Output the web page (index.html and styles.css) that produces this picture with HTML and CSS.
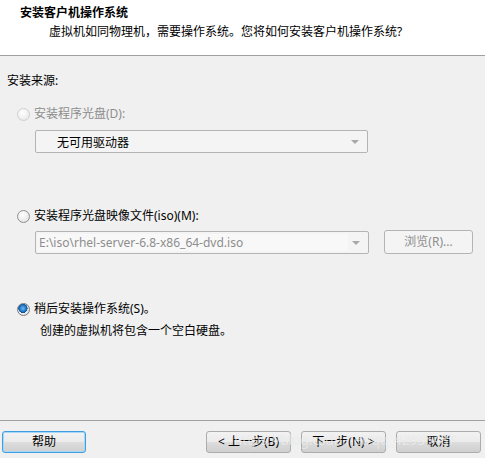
FILE: index.html
```html
<!DOCTYPE html>
<html lang="zh-CN">
<head>
<meta charset="utf-8">
<title>新建虚拟机向导</title>
<link rel="stylesheet" href="styles.css">
</head>
<body>
<div class="dialog">
  <div class="header">
    <div class="title">安装客户机操作系统</div>
    <div class="subtitle">虚拟机如同物理机，需要操作系统。您将如何安装客户机操作系统?</div>
  </div>
  <div class="main">
    <div class="section-label">安装来源:</div>

    <div class="option opt-disc">
      <span class="radio disabled"></span>
      <span class="label disabled-text">安装程序光盘(D):</span>
    </div>
    <div class="combo disabled-combo">
      <span class="combo-text">无可用驱动器</span>
      <span class="arrow"></span>
    </div>

    <div class="option opt-iso">
      <span class="radio"></span>
      <span class="label">安装程序光盘映像文件(iso)(M):</span>
    </div>
    <div class="iso-row">
      <div class="combo iso-combo">
        <span class="iso-field">E:\iso\rhel-server-6.8-x86_64-dvd.iso</span>
        <span class="arrow"></span>
      </div>
      <div class="btn browse">浏览(R)...</div>
    </div>

    <div class="option opt-later">
      <span class="radio checked"></span>
      <span class="label">稍后安装操作系统(S)。</span>
    </div>
    <div class="note">创建的虚拟机将包含一个空白硬盘。</div>
  </div>
  <div class="footer">
    <div class="btn help">帮助</div>
    <div class="nav">
      <div class="btn">&lt; 上一步(B)</div>
      <div class="btn">下一步(N) &gt;</div>
      <div class="btn">取消</div>
    </div>
    <div class="watermark">https://blog.csdn.net/qq_42935487</div>
  </div>
</div>
</body>
</html>
```
FILE: styles.css
```css
html, body {
  margin: 0;
  padding: 0;
}
body {
  width: 485px;
  height: 458px;
  background: #f0f0f0;
  font-family: "Noto Sans", "Noto Sans CJK SC", sans-serif;
  font-size: 12px;
  color: #000;
  overflow: hidden;
}
.dialog {
  display: flex;
  flex-direction: column;
  height: 458px;
}
.header {
  background: #fff;
  border-bottom: 1px solid #a0a0a0;
  box-sizing: border-box;
  height: 56px;
  padding-top: 4px;
}
.title {
  font-weight: bold;
  padding-left: 20px;
  line-height: 17px;
}
.subtitle {
  padding-left: 49px;
  line-height: 17px;
  margin-top: 2px;
}
.main {
  flex: 1;
  padding: 0 0 0 7px;
  display: flex;
  flex-direction: column;
}
.section-label {
  margin-top: 17px;
  line-height: 16px;
}
.option {
  display: flex;
  align-items: center;
  gap: 4px;
  margin-left: 10px;
  height: 16px;
}
.opt-disc { margin-top: 17px; }
.opt-iso { margin-top: 55px; }
.opt-later { margin-top: 47px; }
.radio {
  width: 11px;
  height: 11px;
  border-radius: 50%;
  border: 1px solid #8f8f8f;
  background: radial-gradient(circle at 40% 35%, #ffffff 0%, #ececec 55%, #d6d6d6 100%);
  box-sizing: content-box;
  flex: none;
}
.radio.disabled {
  border-color: #cfcfcf;
  background: radial-gradient(circle at 40% 35%, #ffffff 0%, #f0f0f0 55%, #e2e2e2 100%);
}
.radio.checked {
  border-color: #7a7a7a;
  background:
    radial-gradient(circle at 45% 40%, #6fb8ec 0%, #1e78c8 35%, #0b4e94 50%, transparent 53%),
    radial-gradient(circle at 40% 35%, #ffffff 0%, #ececec 60%, #cfcfcf 100%);
}
.label { line-height: 16px; }
.disabled-text { color: #8d8d8d; }
.combo {
  position: relative;
  box-sizing: border-box;
  height: 23px;
  border: 1px solid #b4b4b4;
  border-radius: 2px;
  background: #f4f4f4;
  display: flex;
  align-items: center;
}
.disabled-combo {
  margin-left: 28px;
  margin-top: 8px;
  width: 333px;
}
.combo-text {
  padding-left: 21px;
  color: #000;
}
.arrow {
  position: absolute;
  right: 8px;
  top: 9px;
  width: 0;
  height: 0;
  border-left: 4px solid transparent;
  border-right: 4px solid transparent;
  border-top: 4px solid #a8a8a8;
}
.iso-row {
  display: flex;
  align-items: center;
  margin-left: 28px;
  margin-top: 6px;
  gap: 15px;
}
.iso-combo {
  width: 334px;
  background: #f4f4f4;
  padding: 2px 20px 2px 2px;
}
.iso-field {
  flex: 1;
  height: 17px;
  line-height: 17px;
  background: #f8f8f8;
  color: #8d8d8d;
  padding-left: 1px;
  white-space: nowrap;
  overflow: hidden;
}
.btn {
  box-sizing: border-box;
  width: 85px;
  height: 22px;
  border: 1px solid #acacac;
  border-radius: 3px;
  background: linear-gradient(#f2f2f2, #ebebeb 50%, #dddddd 51%, #cfcfcf);
  display: flex;
  align-items: center;
  justify-content: center;
  line-height: 16px;
}
.browse {
  width: 89px;
  height: 24px;
  background: #f4f4f4;
  border-color: #b4b4b4;
  color: #8d8d8d;
}
.note {
  margin-left: 33px;
  margin-top: 6px;
  line-height: 16px;
}
.footer {
  position: relative;
  height: 38px;
  border-top: 1px solid #a0a0a0;
  box-sizing: border-box;
  display: flex;
  align-items: flex-start;
  justify-content: space-between;
  padding: 10px 4px 0 2px;
}
.help {
  border: 1px solid #3c9ee0;
  box-shadow: inset 0 0 0 1px #a8d8f8;
  width: 84px;
}
.nav {
  display: flex;
  gap: 10px;
}
.nav .btn { width: 85px; }
.watermark {
  position: absolute;
  left: 234px;
  top: 10px;
  font-size: 13.5px;
  line-height: 18px;
  color: rgba(255, 255, 255, 0.6);
  text-shadow: 0 0 1px rgba(120, 120, 120, 0.2);
  pointer-events: none;
  white-space: nowrap;
}
```
